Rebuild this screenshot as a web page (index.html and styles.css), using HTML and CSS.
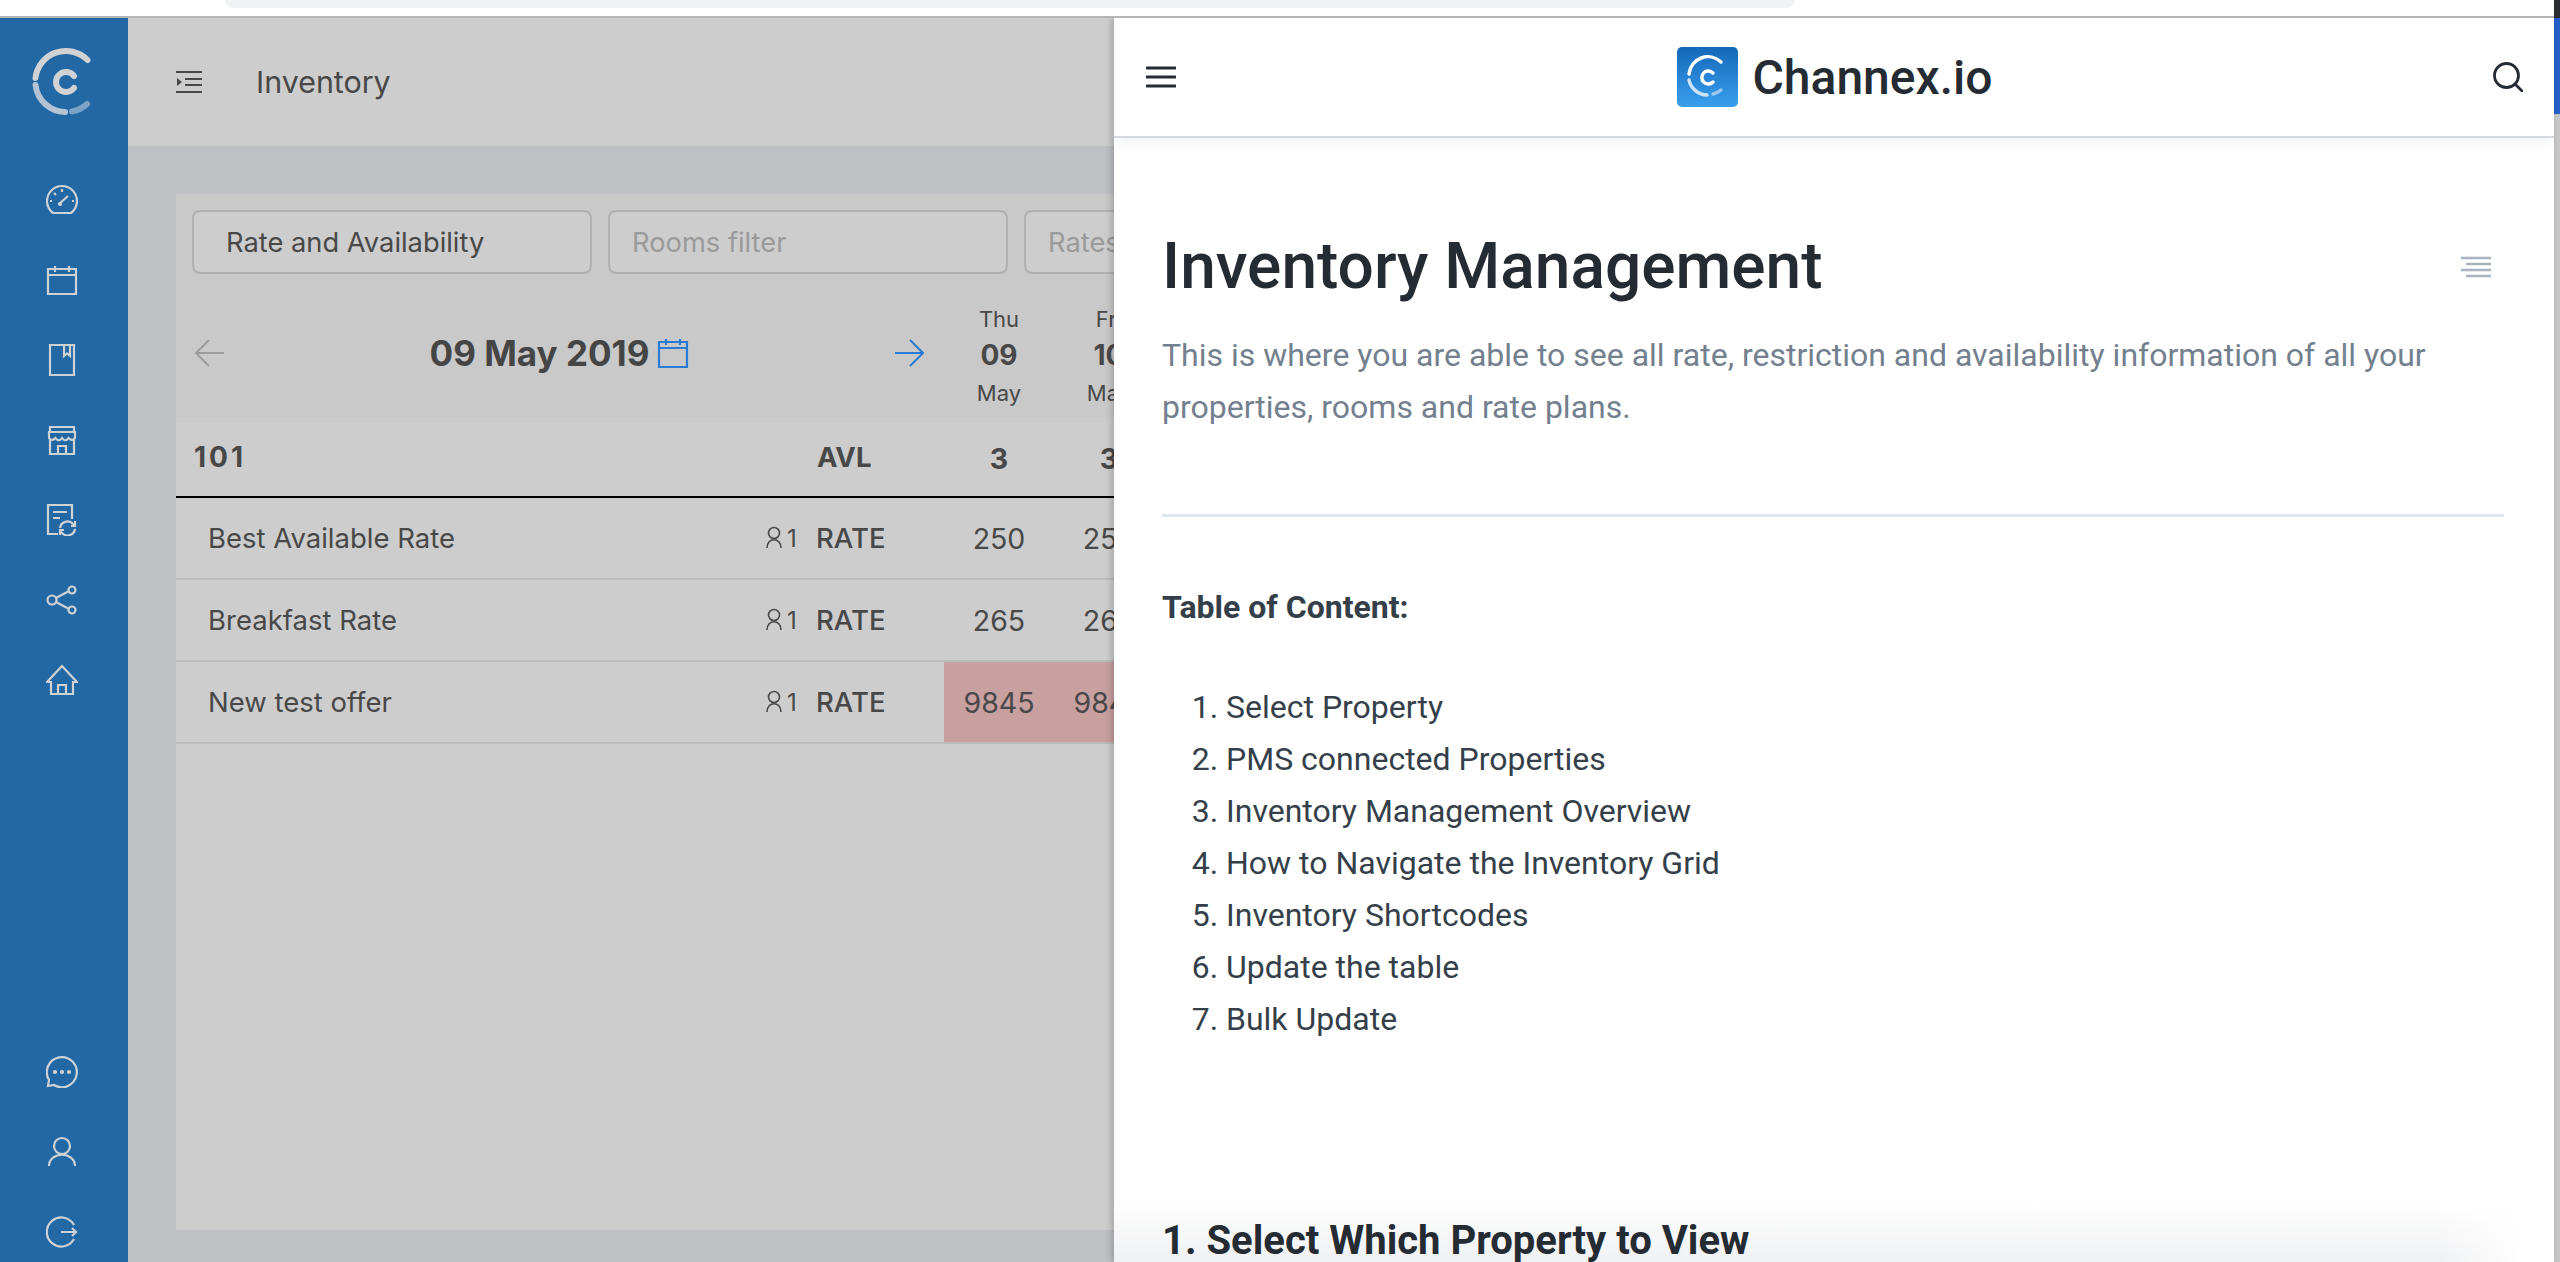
FILE: index.html
```html
<!DOCTYPE html>
<html lang="en">
<head>
<meta charset="UTF-8">
<meta name="viewport" content="width=device-width, initial-scale=1.0">
<title>Inventory</title>
<link rel="stylesheet" href="styles.css">
</head>
<body>

<div class="browser-bar"><div class="address-pill"></div><div class="scrollbar-cap"></div></div>

<div class="main">
  <div class="app">
    <aside class="sidebar">
      <div class="side-logo">
        <svg width="68" height="76" viewBox="0 0 68 76" fill="none" stroke-linecap="round">
          <path d="M57.500 13 A30.500 30.500 0 0 0 5.500 31" stroke="#d0d2d4" stroke-width="6"/>
          <path d="M5.500 38 A30.500 30.500 0 0 0 35 65" stroke="#b4c4d4" stroke-width="6"/>
          <path d="M42 64.500 A30.500 30.500 0 0 0 57 57" stroke="#7ca3c6" stroke-width="6"/>
          <path d="M44 29 A10 10 0 1 0 44 41" stroke="#d0d2d4" stroke-width="6"/>
        </svg>
      </div>
      <ul class="side-nav">
        <li><svg class="side-icon" viewBox="0 0 32 32"><path d="M7 29 A15 15 0 1 1 25 29 Z"/><path d="M13 20L22 12M16 5v3M4 17h2M26 17h2M8 9l2 2"/><circle cx="14" cy="20" r="1"/></svg></li>
        <li><svg class="side-icon" viewBox="0 0 32 32"><path d="M2 5h28v25H2zM2 11h28M9 2v6M23 2v6"/></svg></li>
        <li><svg class="side-icon" viewBox="0 0 32 32"><path d="M4 1h24v30H4zM18 1v11l3-2.500 3 2.500V1"/></svg></li>
        <li><svg class="side-icon" viewBox="0 0 32 32"><path d="M4 3h24v5H4zM3 8h26v5c0 3-4 4-6.500 1-2 3-4.500 3-6.500 0-2 3-4.500 3-6.500 0C7 17 3 16 3 13zM4 16v14h24V16M12 30v-8h8v8"/></svg></li>
        <li><svg class="side-icon" viewBox="0 0 32 32"><path d="M12 30H2V1h24v14M7 8h14M7 14h7"/><path d="M14 24a7.500 7.500 0 0 1 13-4l2 2M29 25a7.500 7.500 0 0 1-13 4l-2-2M29 17v5h-4M14 31v-5h4"/></svg></li>
        <li><svg class="side-icon" viewBox="0 0 32 32"><circle cx="6" cy="16" r="4.500"/><circle cx="26" cy="6" r="3.500"/><circle cx="26" cy="26" r="3.500"/><path d="M10 14l13-7M10 18l13 7"/></svg></li>
        <li><svg class="side-icon" viewBox="0 0 32 32"><path d="M16 2L1 18h4v12h22V18h4zM12 30v-9h8v9"/></svg></li>
      </ul>
      <ul class="side-nav side-nav-bottom">
        <li><svg class="side-icon" viewBox="0 0 32 32"><path d="M2 30l1-6A15 15 0 1 1 8 29z"/><circle class="dot" cx="9" cy="16" r="1"/><circle class="dot" cx="16" cy="16" r="1"/><circle class="dot" cx="23" cy="16" r="1"/></svg></li>
        <li><svg class="side-icon" viewBox="0 0 32 32"><circle cx="16" cy="10" r="8"/><path d="M3 30c0-15 26-15 26 0"/></svg></li>
        <li><svg class="side-icon" viewBox="0 0 32 32"><path d="M28 9A14.500 14.500 0 1 0 28 23M15 16h15M26 12l4 4-4 4"/></svg></li>
      </ul>
    </aside>

    <div class="content">
      <header class="app-header">
        <svg class="indent-icon" viewBox="0 0 26 22"><path d="M0 1h26M9 8h17M9 14h17M0 21h26"/><path class="solid" d="M1 7v8l5-4z"/></svg>
        <span class="app-title">Inventory</span>
      </header>

      <div class="page">
        <div class="card">
          <div class="toolbar">
            <div class="filters">
              <div class="filter">Rate and Availability</div>
              <div class="filter filter-empty">Rooms filter</div>
              <div class="filter filter-empty">Rates filter</div>
            </div>
            <div class="date-row">
              <div class="date-nav">
                <svg class="arrow" viewBox="0 0 30 28"><path d="M29 14H2M14 1L1 14l13 13"/></svg>
                <div class="date-label">
                  <span>09 May 2019</span>
                  <svg class="cal-icon" viewBox="0 0 32 32"><path d="M2 5h28v25H2zM2 11h28M9 2v6M23 2v6"/></svg>
                </div>
                <svg class="arrow arrow-next" viewBox="0 0 30 28"><path d="M1 14h27M16 1l13 13-13 13"/></svg>
              </div>
              <div class="day"><span>Thu</span><b>09</b><span>May</span></div>
              <div class="day"><span>Fri</span><b>10</b><span>May</span></div>
            </div>
          </div>

          <div class="row row-head">
            <div class="cell-name">101</div>
            <div class="cell-occ"></div>
            <div class="cell-type">AVL</div>
            <div class="cell-val">3</div>
            <div class="cell-val">3</div>
          </div>
          <div class="row">
            <div class="cell-name">Best Available Rate</div>
            <div class="cell-occ"><svg class="person" viewBox="0 0 20 24"><circle cx="10" cy="7" r="5.500"/><path d="M3 22c0-11 14-11 14 0"/></svg>1</div>
            <div class="cell-type">RATE</div>
            <div class="cell-val">250</div>
            <div class="cell-val">250</div>
          </div>
          <div class="row">
            <div class="cell-name">Breakfast Rate</div>
            <div class="cell-occ"><svg class="person" viewBox="0 0 20 24"><circle cx="10" cy="7" r="5.500"/><path d="M3 22c0-11 14-11 14 0"/></svg>1</div>
            <div class="cell-type">RATE</div>
            <div class="cell-val">265</div>
            <div class="cell-val">265</div>
          </div>
          <div class="row">
            <div class="cell-name">New test offer</div>
            <div class="cell-occ"><svg class="person" viewBox="0 0 20 24"><circle cx="10" cy="7" r="5.500"/><path d="M3 22c0-11 14-11 14 0"/></svg>1</div>
            <div class="cell-type">RATE</div>
            <div class="cell-val cell-alert">9845</div>
            <div class="cell-val cell-alert">9845</div>
          </div>
        </div>
      </div>
    </div>
  </div>

  <section class="drawer">
    <header class="drawer-header">
      <svg class="burger" viewBox="0 0 30 22"><path d="M1 2h28M1 11h28M1 20h28"/></svg>
      <div class="brand">
        <svg class="brand-icon" width="61" height="60" viewBox="0 0 61 60" fill="none" stroke-linecap="round">
          <defs>
            <linearGradient id="brandFill" x1="0" y1="0" x2="0" y2="1">
              <stop offset="0" stop-color="#1568b8"/>
              <stop offset="1" stop-color="#3a9ff0"/>
            </linearGradient>
          </defs>
          <rect width="61" height="60" rx="5" fill="url(#brandFill)"/>
          <path d="M44 15 A19 19 0 0 0 12 27" stroke="#fff" stroke-width="3.500"/>
          <path d="M12 33 A19 19 0 0 0 30 48" stroke="#cfe4f8" stroke-width="3.500"/>
          <path d="M36 47 A19 19 0 0 0 44 43" stroke="#9ac8f2" stroke-width="3.500"/>
          <path d="M36 26 A6.500 6.500 0 1 0 36 35" stroke="#fff" stroke-width="3.500"/>
        </svg>
        <span class="brand-name">Channex.io</span>
      </div>
      <svg class="search" viewBox="0 0 30 30"><circle cx="13.500" cy="13.500" r="12"/><path d="M22 22l7 7"/></svg>
    </header>

    <article class="doc">
      <div class="doc-head">
        <h1>Inventory Management</h1>
        <svg class="toc-icon" viewBox="0 0 30 22"><path d="M0 2h30M6 8h24M0 14h30M6 20h24"/></svg>
      </div>
      <p class="lead">This is where you are able to see all rate, restriction and availability information of all your properties, rooms and rate plans.</p>
      <hr class="doc-rule">
      <p class="toc-title">Table of Content:</p>
      <ol class="toc">
        <li>Select Property</li>
        <li>PMS connected Properties</li>
        <li>Inventory Management Overview</li>
        <li>How to Navigate the Inventory Grid</li>
        <li>Inventory Shortcodes</li>
        <li>Update the table</li>
        <li>Bulk Update</li>
      </ol>
      <h2>1. Select Which Property to View</h2>
    </article>
    <div class="doc-fade"></div>
  </section>

  <div class="scrollbar"><div class="scrollbar-thumb"></div></div>
</div>

</body>
</html>
```

FILE: styles.css
```css
* {
  box-sizing: border-box;
}
html, body {
  margin: 0;
  height: 1262px;
  overflow: hidden;
  background: #fff;
}
body {
  font-family: Inter, "Liberation Sans", sans-serif;
  color: #454545;
}

/* browser chrome sliver */
.browser-bar {
  height: 18px;
  background: #fff;
  border-bottom: 2px solid #b5b5b5;
  position: relative;
}
.address-pill {
  position: absolute;
  left: 225px;
  top: 0;
  width: 1570px;
  height: 8px;
  background: #f1f2f4;
  border-radius: 0 0 16px 16px;
}
.scrollbar-cap {
  position: absolute;
  right: 0;
  top: 0;
  width: 6px;
  height: 18px;
  background: #2a2c30;
}

.main {
  display: flex;
  height: 1244px;
  overflow: hidden;
}
.app {
  display: flex;
  width: 1114px;
  flex-shrink: 0;
  overflow: hidden;
}

/* sidebar */
.sidebar {
  width: 128px;
  flex-shrink: 0;
  background: #2268a5;
  overflow: hidden;
}
.side-logo {
  height: 142px;
  padding: 29px 0 0 30px;
}
.side-nav {
  list-style: none;
  margin: 0;
  padding: 0;
}
.side-nav li {
  height: 80px;
  display: flex;
  align-items: center;
  justify-content: center;
  padding-right: 4px;
}
.side-nav-bottom {
  margin-top: 312px;
}
.side-icon {
  width: 32px;
  height: 32px;
  fill: none;
  stroke: #cfd2d5;
  stroke-width: 2.200;
}
.side-icon .dot {
  fill: #cfd2d5;
}

/* app area */
.content {
  flex: 1;
  min-width: 0;
  background: #bfc0c4;
}
.app-header {
  height: 128px;
  background: #cdcdcd;
  display: flex;
  align-items: center;
  padding-left: 48px;
  gap: 54px;
}
.indent-icon {
  width: 26px;
  height: 22px;
  fill: none;
  stroke: #484848;
  stroke-width: 2;
}
.indent-icon .solid {
  fill: #484848;
  stroke: none;
}
.app-title {
  font-size: 30.400px;
  color: #484848;
}
.page {
  padding: 48px 0 0 48px;
}
.card {
  width: 1100px;
  height: 1036px;
  background: #cdcdcd;
}
.toolbar {
  background: #c9c9c9;
  height: 224px;
  padding: 16px 0 0 16px;
}
.filters {
  display: flex;
  gap: 16px;
}
.filter {
  width: 400px;
  height: 64px;
  flex-shrink: 0;
  border: 2px solid #b0b0b0;
  border-radius: 8px;
  background: #cdcdcd;
  padding-left: 32px;
  font-size: 27.300px;
  line-height: 62px;
  color: #484848;
}
.filter-empty {
  color: #9a9a9a;
  padding-left: 22px;
}
.date-row {
  display: flex;
  margin-top: 25px;
  height: 114px;
  align-items: center;
}
.date-nav {
  width: 752px;
  display: flex;
  justify-content: space-between;
  align-items: center;
  padding: 0 20px 6px 3px;
}
.arrow {
  width: 30px;
  height: 28px;
  fill: none;
  stroke: #9c9c9c;
  stroke-width: 2;
}
.arrow-next {
  stroke: #2a7bd4;
}
.date-label {
  display: flex;
  align-items: center;
  gap: 8px;
  font-size: 35px;
  font-weight: 700;
  color: #454545;
}
.cal-icon {
  width: 32px;
  height: 32px;
  fill: none;
  stroke: #2a7bd4;
  stroke-width: 2.200;
}
.day {
  width: 110px;
  flex-shrink: 0;
  display: flex;
  flex-direction: column;
  align-items: center;
  gap: 5px;
  font-size: 22px;
  line-height: 30px;
  color: #484848;
}
.day b {
  font-size: 28px;
  line-height: 32px;
  margin-bottom: 2px;
}

/* grid rows */
.row {
  display: flex;
  height: 82px;
  align-items: center;
  border-bottom: 2px solid #bcbcbc;
  font-size: 27.500px;
  color: #484848;
}
.row-head {
  height: 80px;
  border-bottom: 2px solid #000;
  font-weight: 700;
}
.cell-name {
  width: 588px;
  padding-left: 32px;
  flex-shrink: 0;
}
.row-head .cell-name {
  padding-left: 18px;
  font-size: 28px;
  letter-spacing: 3px;
}
.cell-occ {
  width: 52px;
  flex-shrink: 0;
  display: flex;
  align-items: center;
  font-size: 24px;
  gap: 3px;
}
.person {
  width: 20px;
  height: 24px;
  fill: none;
  stroke: #484848;
  stroke-width: 1.600;
}
.cell-type {
  width: 128px;
  flex-shrink: 0;
  font-weight: 500;
}
.row-head .cell-type {
  font-weight: 700;
  padding-left: 1px;
}
.row-head .cell-val {
  padding-top: 2px;
}
.cell-val {
  width: 110px;
  height: 100%;
  flex-shrink: 0;
  display: flex;
  align-items: center;
  justify-content: center;
  font-size: 28.500px;
}
.cell-alert {
  background: #c9a0a0;
}

/* help drawer */
.drawer {
  width: 1440px;
  flex-shrink: 0;
  background: #fff;
  position: relative;
  box-shadow: -2px 0 7px rgba(0, 0, 0, .22);
  font-family: Roboto, "Liberation Sans", sans-serif;
  color: #343f4a;
  overflow: hidden;
}
.drawer-header {
  height: 120px;
  border-bottom: 2px solid #d5d9de;
  box-shadow: 0 4px 14px rgba(60, 80, 90, .08);
  display: flex;
  align-items: center;
  justify-content: space-between;
  padding: 0 31px 0 32px;
}
.burger {
  width: 30px;
  height: 22px;
  fill: none;
  stroke: #252b33;
  stroke-width: 3;
  stroke-linecap: round;
}
.brand {
  display: flex;
  align-items: center;
  gap: 15px;
}
.brand-name {
  font-size: 48px;
  font-weight: 500;
  color: #252b33;
}
.search {
  width: 30px;
  height: 30px;
  fill: none;
  stroke: #252b33;
  stroke-width: 2.800;
  stroke-linecap: round;
}
.doc {
  position: relative;
  z-index: 1;
  padding: 86px 50px 0 48px;
}
.doc-head {
  display: flex;
  justify-content: space-between;
  align-items: center;
  padding-right: 13px;
}
h1 {
  margin: 0;
  font-size: 64px;
  font-weight: 500;
  line-height: 86px;
  color: #252b33;
}
.toc-icon {
  width: 30px;
  height: 22px;
  fill: none;
  stroke: #a9b4c0;
  stroke-width: 2.400;
  stroke-linecap: round;
}
.lead {
  margin: 19px 0 0;
  font-size: 32px;
  line-height: 52px;
  color: #73808e;
}
.doc-rule {
  margin: 81px 0 0;
  border: 0;
  border-top: 3px solid #dbe6ee;
}
.toc-title {
  margin: 64px 0 0;
  font-size: 32px;
  line-height: 52px;
  font-weight: 700;
  color: #343f4a;
}
.toc {
  margin: 48px 0 0;
  padding-left: 64px;
  font-size: 32px;
  line-height: 52px;
}
h2 {
  margin: 168px 0 0;
  font-size: 40px;
  font-weight: 700;
  line-height: 56px;
  color: #252b33;
}
.doc-fade {
  position: absolute;
  left: 0;
  right: 0;
  bottom: 0;
  height: 60px;
  background: linear-gradient(rgba(238, 239, 241, 0), rgba(238, 239, 241, .9));
  -webkit-mask-image: linear-gradient(to right, #000 92%, transparent 98%);
  mask-image: linear-gradient(to right, #000 92%, transparent 98%);
}

.scrollbar {
  width: 6px;
  flex-shrink: 0;
  background: #c8c8c8;
}
.scrollbar-thumb {
  height: 96px;
  background: #2460c8;
}
```
